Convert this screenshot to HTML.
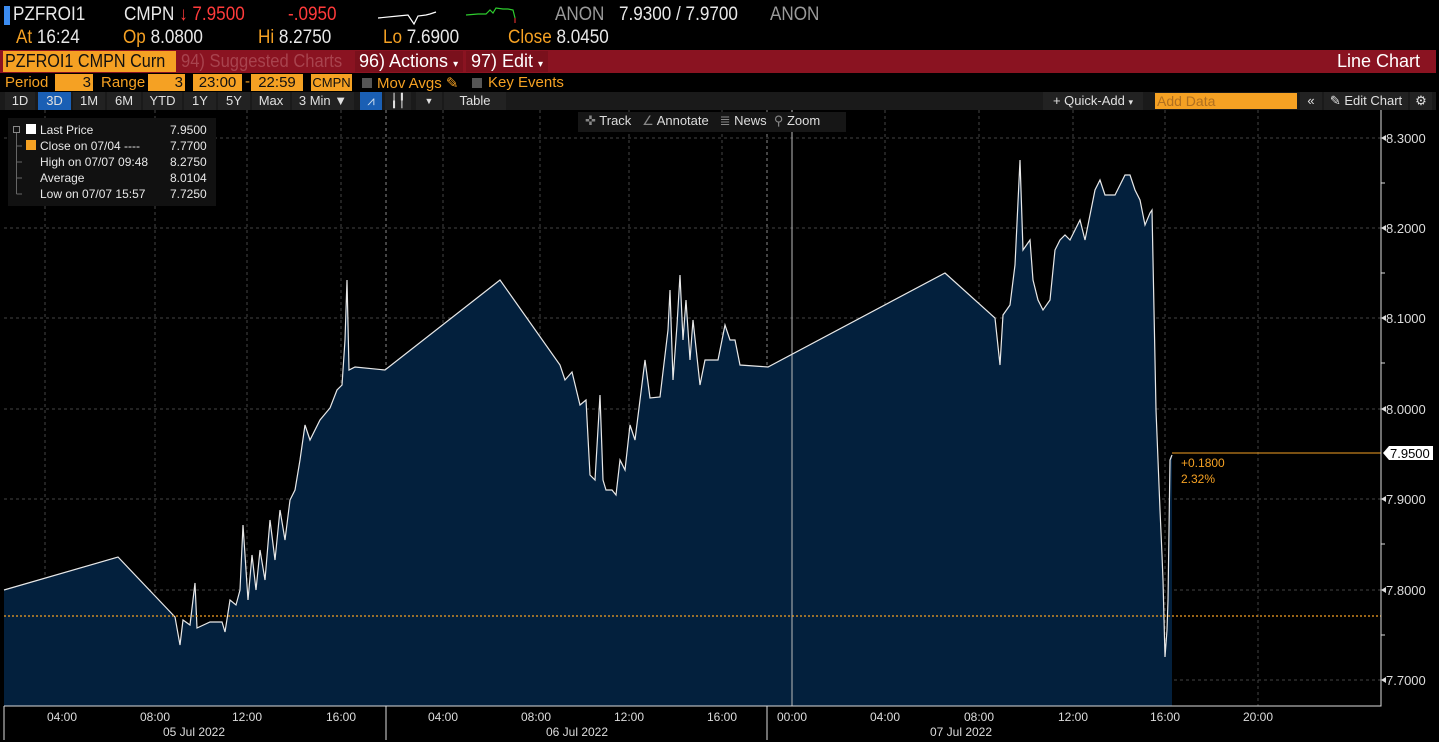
<!DOCTYPE html>
<html><head><meta charset="utf-8"><style>
*{margin:0;padding:0;box-sizing:border-box}
body{width:1439px;height:742px;background:#000;overflow:hidden;position:relative;font-family:"Liberation Sans",sans-serif;color:#ddd}
.a{position:absolute;white-space:nowrap}
.n{transform:scaleX(0.9);transform-origin:0 0}
.o{color:#f5a123}
.btn{position:absolute;top:92px;height:18px;background:#222;color:#e0e0e0;font-size:13px;line-height:18px;text-align:center}
</style></head><body>
<!-- row1 -->
<div class="a" style="left:4px;top:6px;width:6px;height:19px;background:#3c8cf0"></div>
<div class="a n" style="left:13px;top:4px;font-size:19px;color:#e8e8e8">PZFROI1</div>
<div class="a n" style="left:124px;top:4px;font-size:19px;color:#e8e8e8">CMPN <span style="color:#ff3b3b">↓ 7.9500</span></div>
<div class="a n" style="left:288px;top:4px;font-size:19px;color:#ff3b3b">-.0950</div>
<svg class="a" style="left:378px;top:6px" width="150" height="22"><polyline points="0,12 20,10 30,9 36,18 40,10 48,9 52,8 58,6" stroke="#fff" fill="none" stroke-width="1.2"/><polyline points="88,9 100,8 108,8 112,4 115,7 118,2 125,3 130,3 135,4 137,12" stroke="#2ecc2e" fill="none" stroke-width="1.2"/><line x1="137" y1="12" x2="137" y2="17" stroke="#f33"/></svg>
<div class="a n" style="left:555px;top:4px;font-size:19px;color:#9a9a9a">ANON</div>
<div class="a n" style="left:619px;top:4px;font-size:19px;color:#e8e8e8">7.9300 / 7.9700</div>
<div class="a n" style="left:770px;top:4px;font-size:19px;color:#9a9a9a">ANON</div>
<!-- row2 -->
<div class="a n" style="left:16px;top:27px;font-size:19px;color:#e8e8e8"><span class="o">At</span> 16:24</div>
<div class="a n" style="left:123px;top:27px;font-size:19px;color:#e8e8e8"><span class="o">Op</span> 8.0800</div>
<div class="a n" style="left:258px;top:27px;font-size:19px;color:#e8e8e8"><span class="o">Hi</span> 8.2750</div>
<div class="a n" style="left:383px;top:27px;font-size:19px;color:#e8e8e8"><span class="o">Lo</span> 7.6900</div>
<div class="a n" style="left:508px;top:27px;font-size:19px;color:#e8e8e8"><span class="o">Close</span> 8.0450</div>
<!-- red bar -->
<div class="a" style="left:0;top:50px;width:1436px;height:23px;background:#8a1321"></div>
<div class="a" style="left:3px;top:51px;width:173px;height:21px;background:#f5a123"></div>
<div class="a" style="left:5px;top:51px;font-size:18px;line-height:21px;color:#111;transform:scaleX(0.9);transform-origin:0 0">PZFROI1 CMPN Curn</div>
<div class="a" style="left:181px;top:51px;font-size:18px;line-height:21px;color:#a8434e;transform:scaleX(0.92);transform-origin:0 0">94) Suggested Charts</div>
<div class="a" style="left:355px;top:51px;width:108px;height:21px;background:#7a101c;font-size:18px;line-height:21px;color:#fff;padding-left:4px">96) Actions <span style="font-size:10px">▾</span></div>
<div class="a" style="left:466px;top:51px;width:82px;height:21px;background:#7a101c;font-size:18px;line-height:21px;color:#fff;padding-left:5px">97) Edit <span style="font-size:10px">▾</span></div>
<div class="a" style="left:1337px;top:51px;font-size:18px;line-height:21px;color:#fff">Line Chart</div>
<!-- row4 -->
<div class="a o" style="left:5px;top:74px;font-size:15px">Period</div>
<div class="a" style="left:55px;top:74px;width:38px;height:17px;background:#f5a123;color:#111;font-size:15px;text-align:right;padding-right:2px">3</div>
<div class="a o" style="left:101px;top:74px;font-size:15px">Range</div>
<div class="a" style="left:148px;top:74px;width:37px;height:17px;background:#f5a123;color:#111;font-size:15px;text-align:right;padding-right:2px">3</div>
<div class="a" style="left:193px;top:74px;width:49px;height:17px;background:#f5a123;color:#111;font-size:15px;text-align:center">23:00</div>
<div class="a o" style="left:245px;top:73px;font-size:15px">-</div>
<div class="a" style="left:251px;top:74px;width:52px;height:17px;background:#f5a123;color:#111;font-size:15px;text-align:center">22:59</div>
<div class="a" style="left:311px;top:74px;width:41px;height:17px;background:#f5a123;color:#111;font-size:13px;line-height:17px;text-align:center">CMPN</div>
<div class="a" style="left:362px;top:78px;width:10px;height:10px;background:#555"></div>
<div class="a o" style="left:377px;top:74px;font-size:15px">Mov Avgs ✎</div>
<div class="a" style="left:472px;top:78px;width:10px;height:10px;background:#555"></div>
<div class="a o" style="left:488px;top:74px;font-size:15px">Key Events</div>
<!-- row5 -->
<div class="a" style="left:0;top:92px;width:1436px;height:18px;background:#1a1a1a"></div>
<div class="btn" style="left:5px;width:30px">1D</div>
<div class="btn" style="left:38px;width:33px;background:#1a5fb4">3D</div>
<div class="btn" style="left:73px;width:32px">1M</div>
<div class="btn" style="left:107px;width:34px">6M</div>
<div class="btn" style="left:143px;width:39px">YTD</div>
<div class="btn" style="left:184px;width:32px">1Y</div>
<div class="btn" style="left:218px;width:32px">5Y</div>
<div class="btn" style="left:252px;width:38px">Max</div>
<div class="btn" style="left:292px;width:62px">3 Min ▼</div>
<div class="btn" style="left:360px;width:22px;background:#1a5fb4;color:#cde">⩘</div>
<div class="btn" style="left:385px;width:26px">╽╿</div>
<div class="btn" style="left:416px;width:26px;font-size:9px">▼</div>
<div class="btn" style="left:444px;width:62px">Table</div>
<div class="btn" style="left:1043px;width:100px">+ Quick-Add <span style="font-size:9px">▾</span></div>
<div class="a" style="left:1155px;top:93px;width:142px;height:16px;background:#f5a123;color:#b07020;font-size:14px;line-height:16px;padding-left:2px">Add Data</div>
<div class="btn" style="left:1300px;width:22px">«</div>
<div class="btn" style="left:1324px;width:84px">✎ Edit Chart</div>
<div class="btn" style="left:1410px;width:22px">⚙</div>
<!-- chart -->
<svg class="a" style="left:0;top:110px" width="1439" height="632" viewBox="0 110 1439 632">
<g stroke="#444" stroke-dasharray="3,3" stroke-width="1">
<line x1="4" y1="138" x2="1381" y2="138"/><line x1="4" y1="228" x2="1381" y2="228"/><line x1="4" y1="318" x2="1381" y2="318"/><line x1="4" y1="409" x2="1381" y2="409"/><line x1="4" y1="499" x2="1381" y2="499"/><line x1="4" y1="590" x2="1381" y2="590"/><line x1="4" y1="680" x2="1381" y2="680"/>
<line x1="155" y1="110" x2="155" y2="706"/><line x1="341" y1="110" x2="341" y2="706"/><line x1="540" y1="110" x2="540" y2="706"/><line x1="722" y1="110" x2="722" y2="706"/><line x1="979" y1="110" x2="979" y2="706"/><line x1="1165" y1="110" x2="1165" y2="706"/><line x1="1258" y1="110" x2="1258" y2="706"/>
<line x1="45" y1="110" x2="45" y2="706"/><line x1="247" y1="110" x2="247" y2="706"/><line x1="443" y1="110" x2="443" y2="706"/><line x1="629" y1="110" x2="629" y2="706"/><line x1="885" y1="110" x2="885" y2="706"/><line x1="1073" y1="110" x2="1073" y2="706"/>
<line x1="386" y1="110" x2="386" y2="706" stroke="#888"/><line x1="767" y1="110" x2="767" y2="706" stroke="#888"/>
</g>
<path fill="#03203d" stroke="none" d="M4,706 L4,590 L118,557 L175,617 L180,645 L183,620 L190,625 L195,583 L197,628 L210,622 L222,622 L225,632 L230,600 L236,605 L240,590 L243,525 L248,600 L252,555 L256,590 L260,550 L265,580 L270,520 L275,560 L280,510 L285,540 L290,500 L295,490 L300,460 L305,425 L310,440 L320,420 L330,408 L337,390 L342,385 L345,340 L347,280 L349,370 L355,367 L385,370 L500,280 L560,365 L565,380 L572,372 L580,405 L586,400 L590,475 L595,480 L600,395 L603,480 L606,490 L612,490 L616,495 L620,460 L625,470 L630,425 L635,440 L640,400 L645,360 L650,398 L660,397 L668,330 L670,290 L673,380 L677,325 L680,275 L683,340 L686,300 L690,360 L693,320 L700,385 L705,360 L712,360 L718,360 L725,325 L730,340 L735,340 L740,365 L768,367 L945,273 L995,318 L1000,365 L1003,315 L1010,305 L1015,265 L1020,160 L1023,250 L1030,240 L1033,280 L1038,300 L1043,310 L1050,300 L1055,250 L1060,240 L1065,235 L1070,240 L1075,230 L1080,220 L1085,240 L1090,215 L1095,190 L1100,180 L1105,195 L1115,195 L1120,185 L1125,175 L1130,175 L1135,190 L1140,200 L1145,225 L1150,213 L1152,210 L1156,410 L1160,510 L1162,555 L1163,580 L1165,657 L1167,630 L1168,600 L1170,460 L1172,455 L1172,706 Z"/>
<line x1="792" y1="110" x2="792" y2="706" stroke="#bbb" stroke-width="1"/>
<polyline fill="none" stroke="#e8e8e8" stroke-width="1.2" points="4,590 118,557 175,617 180,645 183,620 190,625 195,583 197,628 210,622 222,622 225,632 230,600 236,605 240,590 243,525 248,600 252,555 256,590 260,550 265,580 270,520 275,560 280,510 285,540 290,500 295,490 300,460 305,425 310,440 320,420 330,408 337,390 342,385 345,340 347,280 349,370 355,367 385,370 500,280 560,365 565,380 572,372 580,405 586,400 590,475 595,480 600,395 603,480 606,490 612,490 616,495 620,460 625,470 630,425 635,440 640,400 645,360 650,398 660,397 668,330 670,290 673,380 677,325 680,275 683,340 686,300 690,360 693,320 700,385 705,360 712,360 718,360 725,325 730,340 735,340 740,365 768,367 945,273 995,318 1000,365 1003,315 1010,305 1015,265 1020,160 1023,250 1030,240 1033,280 1038,300 1043,310 1050,300 1055,250 1060,240 1065,235 1070,240 1075,230 1080,220 1085,240 1090,215 1095,190 1100,180 1105,195 1115,195 1120,185 1125,175 1130,175 1135,190 1140,200 1145,225 1150,213 1152,210 1156,410 1160,510 1162,555 1163,580 1165,657 1167,630 1168,600 1170,460 1172,455"/>
<line x1="4" y1="616" x2="1381" y2="616" stroke="#f5a123" stroke-dasharray="2,2" stroke-width="1.3"/>
<line x1="1172" y1="453" x2="1381" y2="453" stroke="#f5a123" stroke-width="1"/>
<text x="1181" y="467" fill="#f5a123" font-size="12" font-family="Liberation Sans">+0.1800</text>
<text x="1181" y="483" fill="#f5a123" font-size="12" font-family="Liberation Sans">2.32%</text>
<polyline points="4,706 1381,706 1381,110" fill="none" stroke="#ddd" stroke-width="1"/>
<g stroke="#ddd"><line x1="1381" y1="544" x2="1385" y2="544"/><line x1="1381" y1="635" x2="1385" y2="635"/><line x1="1381" y1="363" x2="1385" y2="363"/><line x1="1381" y1="273" x2="1385" y2="273"/><line x1="1381" y1="183" x2="1385" y2="183"/>
<line x1="386" y1="706" x2="386" y2="740"/><line x1="767" y1="706" x2="767" y2="740"/><line x1="4" y1="706" x2="4" y2="740"/>
</g>
<g fill="#ddd" font-size="13" font-family="Liberation Sans">
<text x="1386" y="143">8.3000</text><text x="1386" y="233">8.2000</text><text x="1386" y="323">8.1000</text><text x="1386" y="414">8.0000</text><text x="1386" y="504">7.9000</text><text x="1386" y="595">7.8000</text><text x="1386" y="685">7.7000</text>
</g>
<g fill="#ddd"><path d="M1381,138 l5,-3 v6z"/><path d="M1381,228 l5,-3 v6z"/><path d="M1381,318 l5,-3 v6z"/><path d="M1381,409 l5,-3 v6z"/><path d="M1381,499 l5,-3 v6z"/><path d="M1381,590 l5,-3 v6z"/><path d="M1381,680 l5,-3 v6z"/></g>
<path d="M1383,453 l6,-7 h44 v14 h-44z" fill="#fff"/>
<text x="1390" y="458" fill="#000" font-size="13" font-family="Liberation Sans">7.9500</text>
<g fill="#ddd" font-size="12" font-family="Liberation Sans" text-anchor="middle">
<text x="62" y="721">04:00</text><text x="155" y="721">08:00</text><text x="247" y="721">12:00</text><text x="341" y="721">16:00</text><text x="443" y="721">04:00</text><text x="536" y="721">08:00</text><text x="629" y="721">12:00</text><text x="722" y="721">16:00</text><text x="792" y="721">00:00</text><text x="885" y="721">04:00</text><text x="979" y="721">08:00</text><text x="1073" y="721">12:00</text><text x="1165" y="721">16:00</text><text x="1258" y="721">20:00</text>
<text x="194" y="736">05 Jul 2022</text><text x="577" y="736">06 Jul 2022</text><text x="961" y="736">07 Jul 2022</text>
</g>
</svg>
<!-- legend -->
<div class="a" style="left:8px;top:118px;width:208px;height:88px;background:#111;"></div>
<svg class="a" style="left:12px;top:122px" width="14" height="80"><rect x="1.5" y="4.5" width="6" height="6" fill="none" stroke="#888"/><line x1="4.5" y1="11" x2="4.5" y2="72" stroke="#666"/><g stroke="#666"><line x1="4.5" y1="24" x2="10" y2="24"/><line x1="4.5" y1="40" x2="10" y2="40"/><line x1="4.5" y1="56" x2="10" y2="56"/><line x1="4.5" y1="72" x2="10" y2="72"/></g></svg>
<div class="a" style="left:26px;top:124px;width:10px;height:10px;background:#fff"></div>
<div class="a" style="left:26px;top:140px;width:10px;height:10px;background:#f5a123"></div>
<div class="a" style="left:40px;top:122px;font-size:12px;line-height:16px;color:#e8e8e8">Last Price<br>Close on 07/04 ----<br>High on 07/07 09:48<br>Average<br>Low on 07/07 15:57</div>
<div class="a" style="left:170px;top:122px;font-size:12px;line-height:16px;color:#e8e8e8">7.9500<br>7.7700<br>8.2750<br>8.0104<br>7.7250</div>
<!-- toolbar in chart -->
<div class="a" style="left:578px;top:112px;width:268px;height:20px;background:#161616"></div>
<div class="a" style="left:585px;top:113px;font-size:13px;color:#ddd"><span style="color:#888">✜</span> Track &nbsp;&nbsp;<span style="color:#888">∠</span> Annotate &nbsp;&nbsp;<span style="color:#888">≣</span> News &nbsp;<span style="color:#888">⚲</span> Zoom</div>
</body></html>
